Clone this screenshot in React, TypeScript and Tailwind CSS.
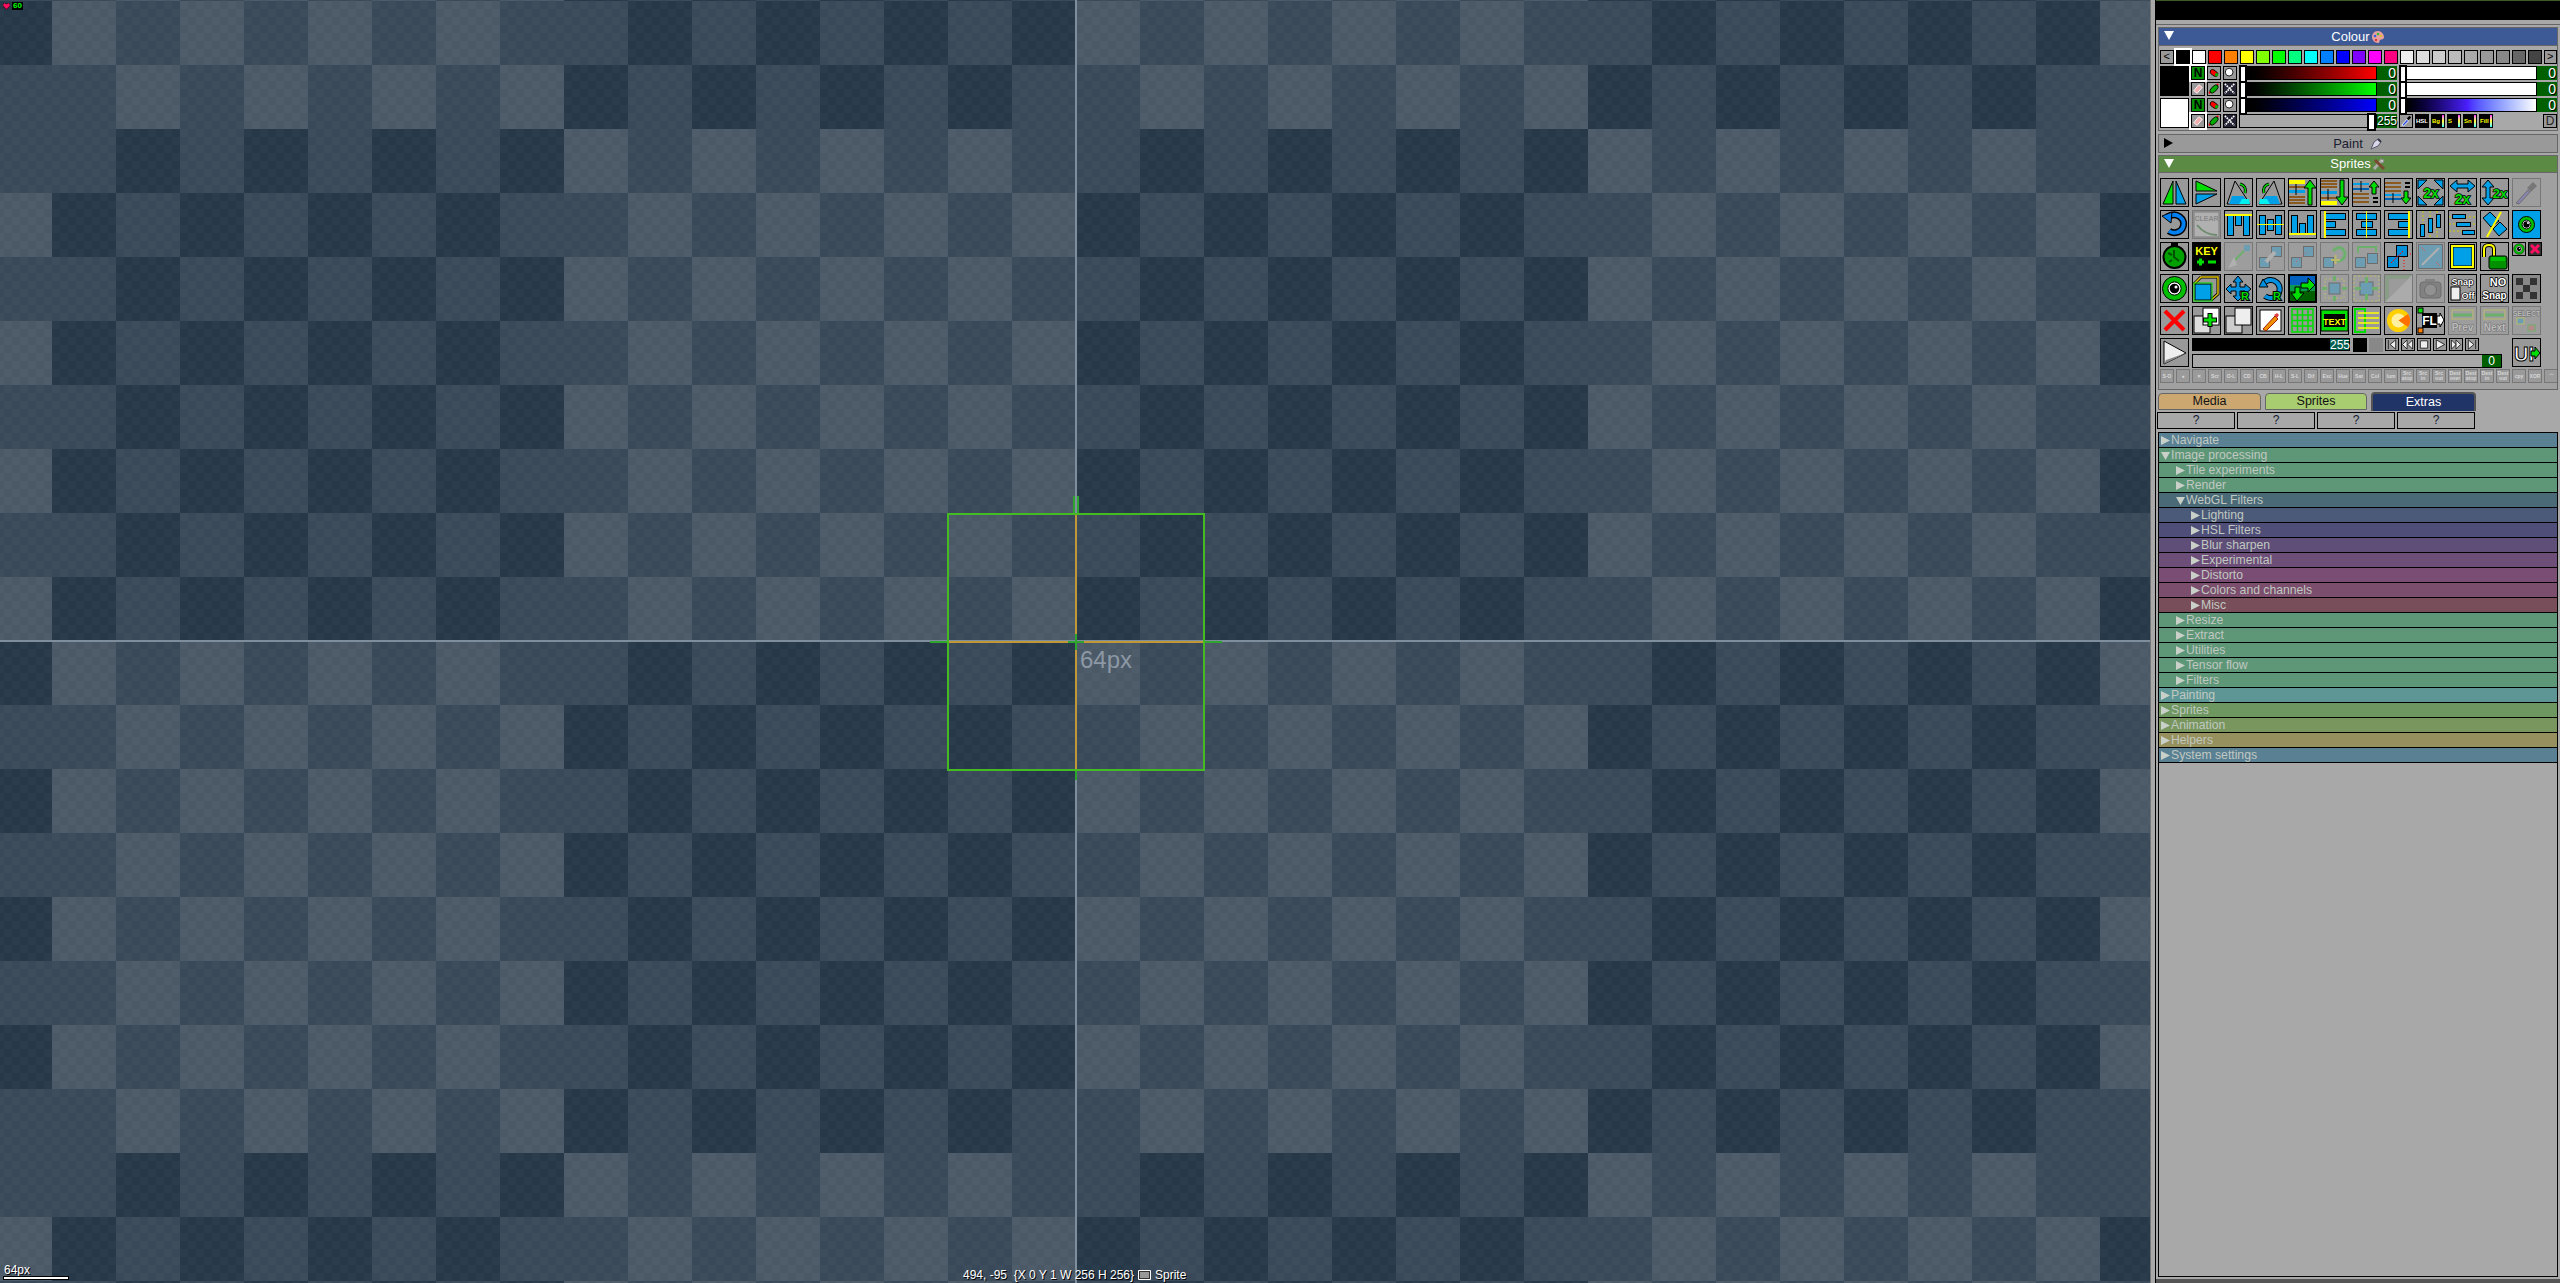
import React from 'react';

const swatches = [
  'bg-[#000000]', 'bg-[#ffffff]', 'bg-[#ff0000]', 'bg-[#ff8000]', 'bg-[#ffff00]', 'bg-[#80ff00]', 'bg-[#00ff00]', 'bg-[#00ff80]',
  'bg-[#00ffff]', 'bg-[#0080ff]', 'bg-[#0000ff]', 'bg-[#8000ff]', 'bg-[#ff00ff]', 'bg-[#ff0080]', 'bg-[#eeeeee]', 'bg-[#dddddd]',
  'bg-[#cccccc]', 'bg-[#bbbbbb]', 'bg-[#aaaaaa]', 'bg-[#999999]', 'bg-[#888888]', 'bg-[#666666]', 'bg-[#444444]',
];

const tree: { label: string; depth: number; open?: boolean; color: string }[] = [
  { label: 'Navigate', depth: 0, color: 'bg-[#5a8094]' },
  { label: 'Image processing', depth: 0, open: true, color: 'bg-[#5e9678]' },
  { label: 'Tile experiments', depth: 1, color: 'bg-[#5e9678]' },
  { label: 'Render', depth: 1, color: 'bg-[#5e9678]' },
  { label: 'WebGL Filters', depth: 1, open: true, color: 'bg-[#4a6a78]' },
  { label: 'Lighting', depth: 2, color: 'bg-[#4a5a78]' },
  { label: 'HSL Filters', depth: 2, color: 'bg-[#4e4e78]' },
  { label: 'Blur sharpen', depth: 2, color: 'bg-[#5e4e78]' },
  { label: 'Experimental', depth: 2, color: 'bg-[#6c4e78]' },
  { label: 'Distorto', depth: 2, color: 'bg-[#7a4e74]' },
  { label: 'Colors and channels', depth: 2, color: 'bg-[#7a4e6c]' },
  { label: 'Misc', depth: 2, color: 'bg-[#784e5a]' },
  { label: 'Resize', depth: 1, color: 'bg-[#5e9678]' },
  { label: 'Extract', depth: 1, color: 'bg-[#5e9678]' },
  { label: 'Utilities', depth: 1, color: 'bg-[#5e9678]' },
  { label: 'Tensor flow', depth: 1, color: 'bg-[#5e9678]' },
  { label: 'Filters', depth: 1, color: 'bg-[#5e9678]' },
  { label: 'Painting', depth: 0, color: 'bg-[#5e9696]' },
  { label: 'Sprites', depth: 0, color: 'bg-[#6e9660]' },
  { label: 'Animation', depth: 0, color: 'bg-[#78965e]' },
  { label: 'Helpers', depth: 0, color: 'bg-[#96905e]' },
  { label: 'System settings', depth: 0, color: 'bg-[#5a8094]' },
];

const depthPad = ['pl-[2px]', 'pl-[17px]', 'pl-[32px]'];

const G = '#00dd00';
const B = '#00a0e8';
const Y = '#ffff00';
const BR = '#8a5a20';

const Ico = ({ children, size = 27 }: { children: React.ReactNode; size?: number }) => (
  <svg viewBox="0 0 27 27" width={size} height={size} className="block" fontFamily="Liberation Sans, sans-serif" fontWeight="bold">
    {children}
  </svg>
);

// outlined label used inside the pixel icons
const T = ({ x, y, s, fill = Y, children, a = 'middle', w = 1.5 }: { x: number; y: number; s: number; fill?: string; children: string; a?: 'middle' | 'start'; w?: number }) => (
  <text x={x} y={y} fontSize={s} fill={fill} textAnchor={a} stroke="#000" strokeWidth={w} paintOrder="stroke">{children}</text>
);

const Bars = ({ rows, x = 1, w = 15 }: { rows: [number, string][]; x?: number; w?: number }) => (
  <g shapeRendering="crispEdges">
    {rows.map(([y, c], i) => <rect key={i} x={x} y={y} width={w} height={2} fill={c} />)}
  </g>
);

const Block = ({ x, y, w, h, fill = B }: { x: number; y: number; w: number; h: number; fill?: string }) => (
  <rect x={x + 0.5} y={y + 0.5} width={w} height={h} fill={fill} stroke="#000" shapeRendering="crispEdges" />
);

const Line = ({ x1, y1, x2, y2, c = Y, w = 1, dash }: { x1: number; y1: number; x2: number; y2: number; c?: string; w?: number; dash?: string }) => (
  <line x1={x1} y1={y1} x2={x2} y2={y2} stroke={c} strokeWidth={w} strokeDasharray={dash} />
);

const Arrows4 = ({ fill = B }: { fill?: string }) => (
  <polygon points="13,1 18,7 15,7 15,12 20,12 20,9 26,14 20,19 20,16 15,16 15,21 18,21 13,26 8,21 11,21 11,16 6,16 6,19 1,14 6,9 6,12 11,12 11,7 8,7" fill={fill} stroke="#000" />
);

const Eye = ({ r = 10 }: { r?: number }) => (
  <g>
    <circle cx="13.5" cy="13.5" r={r} fill="#00c000" stroke="#000" />
    <circle cx="13.5" cy="13.5" r={r * 0.55} fill="#fff" stroke="#000" />
    <circle cx="13.5" cy="13.5" r={r * 0.4} fill="#000" />
    <circle cx="15" cy="12" r={r * 0.13} fill="#fff" />
  </g>
);

const Cross = () => (
  <g stroke="#ff0000" strokeWidth="4">
    <line x1="4" y1="4" x2="23" y2="23" />
    <line x1="23" y1="4" x2="4" y2="23" />
  </g>
);

const grid: { icon: React.ReactNode; off?: boolean }[][] = [
  [
    { icon: <Ico><polygon points="12,2 12,25 2,25" fill={G} stroke="#000" /><polygon points="15,2 15,25 25,25" fill={B} stroke="#000" /></Ico> },
    { icon: <Ico><polygon points="3,2 24,12 3,12" fill={G} stroke="#000" /><polygon points="3,15 24,15 3,25" fill={B} stroke="#000" /></Ico> },
    { icon: <Ico><polygon points="10,2 25,25 2,25" fill="#999" stroke="#000" /><polygon points="7,17 18,17 25,25 4,25" fill={B} /><polygon points="17,20 24,20 25,25 14,25" fill="#00f0f0" /><path d="M15 5 Q22 7 20 14" fill="none" stroke="#000" strokeWidth="3" /><path d="M15 5 Q22 7 20 14" fill="none" stroke={G} strokeWidth="1.5" /></Ico> },
    { icon: <Ico><polygon points="17,2 2,25 25,25" fill="#999" stroke="#000" /><polygon points="20,17 9,17 2,25 23,25" fill={B} /><polygon points="10,20 3,20 2,25 13,25" fill="#00f0f0" /><path d="M12 5 Q5 7 7 14" fill="none" stroke="#000" strokeWidth="3" /><path d="M12 5 Q5 7 7 14" fill="none" stroke={G} strokeWidth="1.5" /></Ico> },
    { icon: <Ico><rect x="0" y="1" width="16" height="4" fill={Y} /><Bars w={16} x={0} rows={[[7, BR], [17, BR], [20, BR], [23, BR]]} /><rect x="0" y="11" width="16" height="3" fill={B} /><Line x1={7} y1={5} x2={7} y2={16} c="#000" /><polygon points="21,1 27,9 23,9 23,26 19,26 19,9 15,9" fill={G} stroke="#000" /></Ico> },
    { icon: <Ico><rect x="0" y="22" width="16" height="4" fill={Y} /><Bars w={16} x={0} rows={[[1, BR], [4, BR], [7, BR], [18, BR]]} /><rect x="0" y="12" width="16" height="3" fill={B} /><Line x1={7} y1={10} x2={7} y2={21} c="#000" /><polygon points="21,26 27,18 23,18 23,1 19,1 19,18 15,18" fill={G} stroke="#000" /></Ico> },
    { icon: <Ico><Bars w={16} x={0} rows={[[4, B], [9, '#0060b0'], [14, BR], [18, BR], [22, BR]]} /><Line x1={8} y1={2} x2={8} y2={13} c="#000" /><polygon points="21,2 26,8 23,8 23,15 19,15 19,8 16,8" fill={G} stroke="#000" /><Bars x={20} w={5} rows={[[18, '#000'], [22, '#000']]} /></Ico> },
    { icon: <Ico><Bars w={16} x={0} rows={[[3, BR], [7, BR], [11, BR], [15, B], [19, '#0060b0']]} /><Line x1={8} y1={14} x2={8} y2={24} c="#000" /><polygon points="21,25 26,19 23,19 23,12 19,12 19,19 16,19" fill={G} stroke="#000" /><Bars x={20} w={5} rows={[[3, '#000'], [7, '#000']]} /></Ico> },
    { icon: <Ico><path d="M1 1h9L1 10zM26 1h-9l9 9zM1 26h9l-9-9zM26 26h-9l9-9z" fill={B} stroke="#000" /><T x={14} y={19} s={14} fill={G}>2x</T></Ico> },
    { icon: <Ico><polygon points="1,7 8,1 8,5 19,5 19,1 26,7 19,13 19,9 8,9 8,13" fill={B} stroke="#000" /><T x={13.5} y={25} s={14} fill={G}>2x</T></Ico> },
    { icon: <Ico><polygon points="7,1 13,8 9,8 9,19 13,19 7,26 1,19 5,19 5,8 1,8" fill={B} stroke="#000" /><T x={19} y={19} s={13} fill={G}>2x</T></Ico> },
    { off: true, icon: <Ico><path d="M3 24 L15 11 L17 13 L6 25z" fill="#5a50e0" stroke="#000" /><path d="M14 9 L20 3 L24 7 L18 13z" fill="#222" /></Ico> },
  ],
  [
    { icon: <Ico><path d="M6 6 C16 0 25 8 22 16 C20 22 12 23 8 20" fill="none" stroke="#000" strokeWidth="7" /><path d="M6 6 C16 0 25 8 22 16 C20 22 12 23 8 20" fill="none" stroke="#0080f0" strokeWidth="4" /><polygon points="1,5 11,1 10,12" fill="#0080f0" stroke="#000" /></Ico> },
    { off: true, icon: <Ico><rect x="1" y="1" width="25" height="25" fill="#ddd" stroke="#333" /><T x={13.5} y={10} s={7} fill="#555" w={0}>CLEAR</T><path d="M4 14 Q12 24 24 24" fill="none" stroke="#060" strokeWidth="2" /></Ico> },
    { icon: <Ico><Block x={2} y={4} w={6} h={20} /><Block x={10} y={4} w={6} h={10} /><Block x={18} y={4} w={6} h={20} /><rect x="0" y="3" width="27" height="2" fill={Y} /></Ico> },
    { icon: <Ico><Block x={2} y={4} w={6} h={19} /><Block x={10} y={8} w={6} h={11} /><Block x={18} y={4} w={6} h={19} /><rect x="0" y="13" width="27" height="1" fill={Y} /></Ico> },
    { icon: <Ico><Block x={2} y={4} w={6} h={18} /><Block x={10} y={12} w={6} h={10} /><Block x={18} y={4} w={6} h={18} /><rect x="0" y="22" width="27" height="2" fill={Y} /></Ico> },
    { icon: <Ico><Block x={4} y={2} w={20} h={6} /><Block x={4} y={10} w={10} h={6} /><Block x={4} y={18} w={20} h={6} /><rect x="3" y="0" width="2" height="27" fill={Y} /></Ico> },
    { icon: <Ico><Block x={3} y={2} w={20} h={6} /><Block x={8} y={10} w={11} h={6} /><Block x={3} y={18} w={20} h={6} /><rect x="13" y="0" width="1" height="27" fill={Y} /></Ico> },
    { icon: <Ico><Block x={3} y={2} w={20} h={6} /><Block x={13} y={10} w={10} h={6} /><Block x={3} y={18} w={20} h={6} /><rect x="23" y="0" width="2" height="27" fill={Y} /></Ico> },
    { icon: <Ico><Line x1={6} y1={0} x2={6} y2={27} dash="2 2" c="#cc0" /><Line x1={13} y1={0} x2={13} y2={27} dash="2 2" c="#cc0" /><Line x1={20} y1={0} x2={20} y2={27} dash="2 2" c="#cc0" /><Block x={3} y={13} w={4} h={12} /><Block x={11} y={7} w={4} h={14} /><Block x={19} y={3} w={4} h={13} /></Ico> },
    { icon: <Ico><Line x1={0} y1={6} x2={27} y2={6} dash="2 2" c="#cc0" /><Line x1={0} y1={13} x2={27} y2={13} dash="2 2" c="#cc0" /><Line x1={0} y1={20} x2={27} y2={20} dash="2 2" c="#cc0" /><Block x={3} y={3} w={13} h={4} /><Block x={7} y={11} w={14} h={4} /><Block x={13} y={19} w={12} h={4} /></Ico> },
    { icon: <Ico><polygon points="2,7 9,1 18,10 10,16" fill={B} stroke="#000" /><polygon points="12,18 19,11 26,18 18,25" fill={B} stroke="#000" /><Line x1={20} y1={1} x2={6} y2={26} w={2} /></Ico> },
    { icon: <Ico><rect x="0" y="0" width="27" height="27" fill={B} /><Eye r={8} /></Ico> },
  ],
  [
    { icon: <Ico><circle cx="13.5" cy="14" r="11" fill="#00a000" stroke="#000" strokeWidth="2" /><path d="M13 7v7l5 4M7 10l4 2M8 19l3-2" stroke="#005000" strokeWidth="2" fill="none" /><rect x="10" y="0" width="7" height="3" fill="#000" /></Ico> },
    { icon: <Ico><rect width="27" height="27" fill="#000" /><text x="13.5" y="12" fontSize="11" textAnchor="middle" fill={Y}>KEY</text><path d="M4 19h7M7.5 15.5v7M15 19h8" stroke={G} strokeWidth="3" /></Ico> },
    { off: true, icon: <Ico><rect x="19" y="2" width="6" height="6" fill={B} /><path d="M6 21 L19 8" stroke={G} strokeWidth="2" /><polygon points="3,25 9,14 12,22" fill="#ddd" /></Ico> },
    { off: true, icon: <Ico><Block x={2} y={14} w={10} h={10} /><Block x={14} y={3} w={10} h={10} /><path d="M9 19 L18 9" stroke="#ddd" strokeWidth="4" /></Ico> },
    { off: true, icon: <Ico><Block x={2} y={14} w={10} h={10} /><Block x={14} y={3} w={10} h={10} /><Line x1={7} y1={19} x2={19} y2={8} c="#f00" dash="2 2" /></Ico> },
    { off: true, icon: <Ico><Block x={2} y={14} w={10} h={10} /><path d="M12 8 Q20 0 24 10 Q24 18 16 18" fill="none" stroke={G} strokeWidth="3" /><path d="M10 17h9M14.5 12v9" stroke={Y} strokeWidth="2" /></Ico> },
    { off: true, icon: <Ico><Block x={2} y={14} w={10} h={10} /><Block x={14} y={10} w={10} h={10} /><path d="M5 10V4h18v5" fill="none" stroke={G} strokeWidth="2" /></Ico> },
    { icon: <Ico><Line x1={19} y1={11} x2={27} y2={11} c="#f00" dash="1 2" /><Line x1={19} y1={11} x2={19} y2={27} c="#f00" dash="1 2" /><Block x={2} y={13} w={11} h={11} fill="#0090d8" /><Block x={11} y={2} w={11} h={11} fill="#0090d8" /><Line x1={6} y1={20} x2={18} y2={8} c="#f00" dash="2 1" /></Ico> },
    { off: true, icon: <Ico><Block x={1} y={1} w={24} h={24} /><path d="M5 22L22 5" stroke="#ddd" strokeWidth="2" /><path d="M4 4l4 4M23 23l-4-4" stroke="#f00" strokeWidth="1" /></Ico> },
    { icon: <Ico><rect x="4" y="4" width="19" height="19" fill={B} stroke="#000" /><rect x="3" y="3" width="21" height="21" fill="none" stroke={Y} strokeWidth="2" /><rect x="1.5" y="1.5" width="24" height="24" fill="none" stroke="#000" /></Ico> },
    { icon: <Ico><path d="M3 14V6Q3 2 8 2Q13 2 13 6V14" fill="none" stroke="#000" strokeWidth="4" /><path d="M3 14V6Q3 2 8 2Q13 2 13 6V14" fill="none" stroke={Y} strokeWidth="2" /><rect x="8" y="13" width="18" height="13" rx="2" fill="#009000" stroke="#000" /><rect x="10" y="14" width="14" height="4" fill="#00c000" /></Ico> },
  ],
  [
    { icon: <Ico><Eye r={12} /></Ico> },
    { icon: <Ico><path d="M8 2H25V19L18 25M8 2L1 9" fill="none" stroke="#000" strokeWidth="3" /><path d="M8 2H25V19L18 25M8 2L1 9" fill="none" stroke="#e0c000" strokeWidth="1.5" /><rect x="2" y="9" width="16" height="16" fill={B} stroke="#000" /><rect x="1" y="8" width="18" height="18" fill="none" stroke={G} /></Ico> },
    { icon: <Ico><Arrows4 fill="#0090e0" /><T x={20} y={25} s={11} fill={G} w={2}>R</T></Ico> },
    { icon: <Ico><path d="M7 8 A9 9 0 1 1 8 21" fill="none" stroke="#000" strokeWidth="6" /><path d="M7 8 A9 9 0 1 1 8 21" fill="none" stroke="#0090e0" strokeWidth="4" /><polygon points="2,12 11,12 6,4" fill="#0090e0" stroke="#000" /><T x={20} y={25} s={11} fill={G} w={2}>R</T></Ico> },
    { icon: <Ico><rect width="27" height="27" fill="#000" /><rect x="1" y="1" width="25" height="9" fill="#0060c0" /><rect x="1" y="10" width="25" height="6" fill="#0a9a50" /><rect x="1" y="16" width="25" height="10" fill="#006000" /><polygon points="12,8 19,8 19,3 26,10 19,17 19,13 12,13" fill={G} stroke="#000" /><polygon points="6,12 11,12 11,18 15,18 8,26 2,18 6,18" fill={G} stroke="#000" /></Ico> },
    { off: true, icon: <Ico><rect x="8" y="8" width="11" height="11" fill={B} stroke="#000" /><rect x="4" y="4" width="19" height="19" fill="none" stroke={Y} strokeDasharray="2 2" /><path d="M13.5 1v5M13.5 26v-5M1 13.5h5M26 13.5h-5" stroke={G} strokeWidth="3" /></Ico> },
    { off: true, icon: <Ico><rect x="7" y="7" width="13" height="13" fill={B} stroke="#000" /><rect x="1" y="1" width="25" height="25" fill="none" stroke={Y} strokeDasharray="2 2" /><path d="M13.5 2v6M13.5 25v-6M2 13.5h6M25 13.5h-6" stroke={G} strokeWidth="3" /></Ico> },
    { off: true, icon: <Ico><rect width="27" height="27" fill="#ccc" /><path d="M0 0h4v4h-4zM8 0h4v4h-4zM4 4h4v4h-4z" fill="#333" /><polygon points="0,0 27,0 0,27" fill="#5a9a5a" /><polygon points="4,4 23,4 4,23" fill="#999" /></Ico> },
    { off: true, icon: <Ico><rect x="3" y="7" width="21" height="16" rx="3" fill="#444" stroke="#000" /><circle cx="13.5" cy="15" r="6" fill="#777" stroke="#000" /><rect x="8" y="4" width="10" height="3" fill="#444" /></Ico> },
    { icon: <Ico><T x={13.5} y={10} s={9} fill="#fff" w={1.2}>Snap</T><rect x="2" y="12" width="9" height="13" fill="#eee" stroke="#000" /><T x={19} y={24} s={9} fill="#fff" w={1.2}>Off</T></Ico> },
    { icon: <Ico><T x={17} y={11} s={11} fill="#fff" w={1.5}>NO</T><T x={13.5} y={24} s={10} fill="#fff" w={1.5}>Snap</T></Ico> },
    { icon: <Ico><rect width="27" height="27" fill="#888" /><path d="M3 3h7v7H3zM17 3h7v7h-7zM10 10h7v7h-7zM3 17h7v7H3zM17 17h7v7h-7z" fill="#333" /></Ico> },
  ],
  [
    { icon: <Ico><Cross /></Ico> },
    { icon: <Ico><rect x="1" y="9" width="16" height="17" fill="#ddd" stroke="#000" /><rect x="10" y="1" width="16" height="17" fill="#fff" stroke="#000" /><path d="M17 6v14M10 13h14" stroke="#000" strokeWidth="5" /><path d="M17 7v12M11 13h12" stroke={G} strokeWidth="3" /></Ico> },
    { icon: <Ico><rect x="1" y="9" width="16" height="17" fill="#ccc" stroke="#000" /><rect x="10" y="1" width="16" height="17" fill="#eee" stroke="#000" /></Ico> },
    { icon: <Ico><rect x="3" y="3" width="21" height="21" fill="#fff" stroke="#000" /><path d="M6 22L18 9l3 3L9 24z" fill="#f09000" stroke="#a02000" /><path d="M17 8l3-2 2 2-2 3z" fill="#e04040" /></Ico> },
    { icon: <Ico><g stroke={G} strokeWidth="1.5" fill="none"><rect x="3" y="2" width="21" height="23" /><path d="M3 8h21M3 13.5h21M3 19h21M8.500 2v23M13.500 2v23M19 2v23" /></g></Ico> },
    { icon: <Ico><rect x="0" y="3" width="27" height="21" fill={G} stroke="#000" /><rect x="3" y="7" width="21" height="13" fill="#000" /><text x="13.5" y="18" fontSize="9" textAnchor="middle" fill={Y}>TEXT</text></Ico> },
    { icon: <Ico><rect x="2" y="2" width="10" height="23" fill="none" stroke={G} strokeWidth="2" /><path d="M5 6h21M5 11h21M5 16h21M5 21h21" stroke={Y} strokeWidth="1.500" /></Ico> },
    { icon: <Ico><circle cx="13.5" cy="13.5" r="11.5" fill="#ffd000" /><circle cx="13.5" cy="13.5" r="7" fill="#fff0a0" /><path d="M13.500 13.500L23 7A11.500 11.500 0 0 1 23 20z" fill="#ff7000" /></Ico> },
    { icon: <Ico><rect x="1" y="1" width="5" height="5" fill={G} stroke="#000" /><rect x="1" y="21" width="5" height="5" fill="#ff8000" stroke="#000" /><rect x="5" y="6" width="15" height="15" fill="#000" /><text x="12.500" y="18" fontSize="12" textAnchor="middle" fill="#fff">FL</text><polygon points="20,9 23,9 23,6 27,13 23,20 23,17 20,17" fill="#fff" stroke="#000" /></Ico> },
    { off: true, icon: <Ico><path d="M4 8h19" stroke={G} strokeWidth="3" /><rect x="3" y="3" width="21" height="9" fill="none" stroke={Y} /><T x={13.5} y={24} s={10} fill="#fff" w={1}>Prev</T></Ico> },
    { off: true, icon: <Ico><path d="M4 8h19" stroke={G} strokeWidth="3" /><rect x="3" y="3" width="21" height="9" fill="none" stroke={Y} /><T x={13.5} y={24} s={10} fill="#fff" w={1}>Next</T></Ico> },
    { off: true, icon: <Ico><T x={13.5} y={9} s={7} fill="#fff" w={1}>SELECT</T><rect x="4" y="11" width="7" height="6" fill={B} stroke={Y} /><rect x="15" y="18" width="7" height="6" fill="#f06060" stroke={G} /></Ico> },
  ],
];

const miniLabels = ['S-O', '●', '✕', 'Scr', 'O-L', 'CD', 'CB', 'H-L', 'S-L', 'Dif', 'Exc', 'Hue', 'Sat', 'Col', 'lum', 'Src atop', 'Src in', 'Src out', 'Dest over', 'Dest atop', 'Dest in', 'Dest out', 'cpy', 'XOR', '⌒'];

const Btn = ({ children, off }: { children: React.ReactNode; off?: boolean }) => (
  <div className={off ? 'w-[29px] h-[29px] border border-[#777] bg-[#9d9d9d] overflow-hidden' : 'w-[29px] h-[29px] border border-black bg-[#999] overflow-hidden'}>
    <div className={off ? 'opacity-30' : ''}>{children}</div>
  </div>
);

const Tiny = ({ children, selected }: { children?: React.ReactNode; selected?: boolean }) => (
  <div className={selected ? 'w-[14px] h-[14px] outline-2 outline-white border border-black bg-[#999] overflow-hidden relative z-10' : 'w-[14px] h-[14px] border border-black bg-[#999] overflow-hidden'}>
    {children}
  </div>
);

const Value = ({ children }: { children: string }) => (
  <div className={`w-[20px] h-full bg-[#006000] text-white ${children.length > 1 ? 'text-[12px]' : 'text-[14px]'} leading-[14px] text-right pr-[1px] [text-shadow:1px_1px_0_#000]`}>{children}</div>
);

const Slider = ({ fill, value, at = 'left' }: { fill: string; value: string; at?: 'left' | 'right' }) => (
  <div className="flex h-[14px] w-[158px]">
    <div className={`relative w-[138px] h-full border border-black ${fill}`}>
      <div className={at === 'left' ? 'absolute left-[-1px] top-[-2px] w-[8px] h-[18px] bg-white border-2 border-black' : 'absolute right-[0px] top-[-2px] w-[9px] h-[18px] bg-white border-2 border-black'} />
    </div>
    <Value>{value}</Value>
  </div>
);

const Tag = ({ children, color }: { children: string; color: string }) => (
  <div className="relative w-[14px] h-[14px] border border-black bg-black overflow-hidden">
    <span className={`absolute left-0 top-[-1px] text-[6px] leading-[14px] font-bold ${color}`}>{children}</span>
    <span className="absolute right-0 top-0 w-[2px] h-full bg-linear-to-b from-[#ff00ff] via-[#ffff00] to-[#00ffff]" />
  </div>
);

const Header = ({ title, open, tone, icon, h = 'h-[19px]' }: { title: string; open?: boolean; tone: string; icon: React.ReactNode; h?: string }) => (
  <div className={`relative flex items-center justify-center gap-[1px] ${h} ${tone} text-[13px] border border-[#666]`}>
    <svg viewBox="0 0 10 10" width="10" height="10" className="absolute left-[5px] top-[3px]">
      {open ? <polygon points="0,0 10,0 5,9" fill="#fff" /> : <polygon points="0,0 9,5 0,10" fill="#000" />}
    </svg>
    <span>{title}</span>
    {icon}
  </div>
);

const Canvas = () => (
  <main className="relative flex-1 h-full overflow-hidden bg-[#273849] [background-image:repeating-conic-gradient(#0000_0_25%,#ffffff05_0_50%),repeating-conic-gradient(#0000_0_25%,#ffffff16_0_50%),repeating-conic-gradient(#0000_0_25%,#ffffff16_0_50%)] [background-size:16px_16px,128px_128px,1024px_1024px] [background-position:12px_9px,52px_1px,564px_129px]">
    {/* fps meter */}
    <div className="absolute left-[3px] top-[2px] flex items-center gap-[2px]">
      <svg viewBox="0 0 8 8" width="7" height="7" className="block"><path d="M0 1h1V0h2v1h2V0h2v1h1v3H7v1H6v1H5v1H3V6H2V5H1V4H0z" fill="#ff1060" stroke="#000" strokeWidth=".5" /></svg>
      <span className="bg-black text-[#00ff00] text-[8px] leading-[8px] font-bold px-[1px]">60</span>
    </div>

    {/* axes */}
    <div className="absolute left-[1075px] top-0 w-[2px] h-full bg-[#7f8e9c]" />
    <div className="absolute left-0 top-[640px] w-full h-[2px] bg-[#7f8e9c]" />

    {/* selection guides */}
    <div className="absolute left-[1073px] top-[496px] w-[6px] h-[17px] border-x-2 border-[#2ea52e]" />
    <div className="absolute left-[947px] top-[641px] w-[258px] h-[2px] bg-[#c09838]" />
    <div className="absolute left-[1075px] top-[513px] w-[2px] h-[258px] bg-[#c09838]" />
    <div className="absolute left-[930px] top-[641px] w-[18px] h-[2px] bg-[#2ea52e]" />
    <div className="absolute left-[1204px] top-[641px] w-[18px] h-[2px] bg-[#2ea52e]" />
    <div className="absolute left-[1068px] top-[641px] w-[16px] h-[2px] bg-[#2ea52e]" />
    <div className="absolute left-[1075px] top-[634px] w-[2px] h-[16px] bg-[#2ea52e]" />
    <div className="absolute left-[1075px] top-[771px] w-[2px] h-[9px] bg-[#2ea52e]" />
    <div className="absolute left-[947px] top-[513px] w-[258px] h-[258px] border-2 border-[#44bb22]" />
    <span className="absolute left-[1080px] top-[646px] text-[24px] leading-[28px] text-[#8c98a4]">64px</span>

    {/* scale and status */}
    <span className="absolute left-[4px] top-[1263px] text-[12px] leading-[14px] text-white [text-shadow:1px_1px_0_#000]">64px</span>
    <div className="absolute left-[3px] top-[1276px] w-[66px] h-[4px] bg-white border border-black" />
    <div className="absolute left-[963px] top-[1268px] flex items-center text-[12px] leading-[14px] text-white [text-shadow:1px_1px_0_#000] whitespace-pre">
      <span>494, -95  {'{'}X 0 Y 1 W 256 H 256{'}'}</span>
      <svg viewBox="0 0 13 10" width="13" height="10" className="mx-[4px]"><path d="M.5.500h12v9H.5zM2 3h9M2 5h9M2 7h9" fill="#333" stroke="#fff" /></svg>
      <span>Sprite</span>
    </div>
  </main>
);

const ColourPanel = () => (
  <div className="flex flex-col gap-[2px] h-[85px] bg-[#a8a8a8] border-x border-b border-[#666] pl-[1px] pt-[4px]">
    <div className="flex gap-[2px] h-[14px]">
      <div className="w-[14px] h-[14px] border border-black bg-[#999] text-[11px] leading-[11px] text-center">&lt;</div>
      <div className="flex gap-[2px]">
        {swatches.map((c, i) => (
          <div key={i} className={i === 0 ? `w-[14px] h-[14px] border border-black outline-2 outline-white ${c}` : `w-[14px] h-[14px] border border-black ${c}`} />
        ))}
      </div>
      <div className="w-[14px] h-[14px] border border-black bg-[#999] text-[11px] leading-[11px] text-center">&gt;</div>
    </div>
    <div className="flex gap-[2px]">
      <div className="flex flex-col gap-[2px] w-[30px]">
        <div className="h-[30px] bg-black" />
        <div className="h-[30px] bg-white border border-black" />
      </div>
      <div className="grid grid-cols-[14px_14px_14px_158px_158px] gap-x-[2px] gap-y-[2px] auto-rows-[14px]">
        <Tiny selected><span className="block bg-[#009000] text-black text-[12px] leading-[12px] font-bold text-center">N</span></Tiny>
        <Tiny><svg viewBox="0 0 14 14"><ellipse cx="7" cy="7" rx="5" ry="3" fill="#f00" stroke="#000" transform="rotate(35 7 7)" /><circle cx="10" cy="9" r="2" fill="#0a0" /></svg></Tiny>
        <Tiny><svg viewBox="0 0 14 14"><circle cx="6" cy="6" r="4.500" fill="#fff" stroke="#000" /></svg></Tiny>
        <Slider fill="bg-linear-to-r from-black to-[#ff0000]" value="0" />
        <Slider fill="bg-white" value="0" />

        <Tiny><svg viewBox="0 0 14 14"><path d="M2 9L8 2l4 3-6 7z" fill="#f0b0b0" stroke="#fff" /></svg></Tiny>
        <Tiny><svg viewBox="0 0 14 14"><path d="M1 12L12 1" stroke="#f00" strokeWidth="2" /><ellipse cx="7" cy="7" rx="6" ry="3" fill="#0a0" stroke="#000" transform="rotate(-45 7 7)" /></svg></Tiny>
        <Tiny><svg viewBox="0 0 14 14"><rect width="14" height="14" fill="#223" /><path d="M1 1l11 11M12 1L1 12" stroke="#fff" strokeWidth="2" strokeDasharray="2 1" /></svg></Tiny>
        <Slider fill="bg-linear-to-r from-black to-[#00ff00]" value="0" />
        <Slider fill="bg-white" value="0" />

        <Tiny><span className="block bg-[#009000] text-black text-[12px] leading-[12px] font-bold text-center">N</span></Tiny>
        <Tiny><svg viewBox="0 0 14 14"><ellipse cx="7" cy="7" rx="5" ry="3" fill="#f00" stroke="#000" transform="rotate(35 7 7)" /><circle cx="10" cy="9" r="2" fill="#0a0" /></svg></Tiny>
        <Tiny><svg viewBox="0 0 14 14"><circle cx="6" cy="6" r="4.500" fill="#fff" stroke="#000" /></svg></Tiny>
        <Slider fill="bg-linear-to-r from-black to-[#0000ff]" value="0" />
        <Slider fill="bg-linear-to-r from-black via-[#4a20ff] to-white" value="0" />

        <Tiny selected><svg viewBox="0 0 14 14"><path d="M2 9L8 2l4 3-6 7z" fill="#f0b0b0" stroke="#fff" /></svg></Tiny>
        <Tiny><svg viewBox="0 0 14 14"><path d="M1 12L12 1" stroke="#f00" strokeWidth="2" /><ellipse cx="7" cy="7" rx="6" ry="3" fill="#0a0" stroke="#000" transform="rotate(-45 7 7)" /></svg></Tiny>
        <Tiny><svg viewBox="0 0 14 14"><rect width="14" height="14" fill="#223" /><path d="M1 1l11 11M12 1L1 12" stroke="#fff" strokeWidth="2" strokeDasharray="2 1" /></svg></Tiny>
        <Slider fill="bg-[#a8a8a8]" value="255" at="right" />
        <div className="flex gap-[2px] h-[14px]">
          <Tiny><svg viewBox="0 0 14 14"><path d="M2 12L8 5l2 2-6 6z" fill="#3050e0" stroke="#fff" /><path d="M8 4l3-3 2 2-3 3z" fill="#000" /></svg></Tiny>
          <div className="w-[14px] h-[14px] border border-black bg-black text-white text-[6px] leading-[12px] font-bold text-center">HSL</div>
          <Tag color="text-[#ffff00]">Bg</Tag>
          <Tag color="text-[#ffff00]">S</Tag>
          <Tag color="text-[#ffff00]">Sn</Tag>
          <Tag color="text-[#ffff00]">Fill</Tag>
          <div className="w-[14px]" />
          <div className="w-[14px]" />
          <div className="w-[14px]" />
          <div className="w-[14px] h-[14px] shrink-0 border border-black bg-[#999] text-[12px] leading-[12px] text-center text-[#222]">D</div>
        </div>
      </div>
    </div>
  </div>
);

const SpritesPanel = () => (
  <div className="flex flex-col h-[217px] bg-[#a0a0a0] border-x border-b border-[#666] pl-[1px] pt-[5px]">
    {grid.map((row, r) => (
      <div key={r} className="flex gap-[3px] h-[32px]">
        {row.map((b, c) => <Btn key={c} off={b.off}>{b.icon}</Btn>)}
        {r === 2 && (
          <div className="flex gap-[2px] h-[14px]">
            <div className="w-[14px] h-[14px] border border-black bg-[#999] overflow-hidden"><Ico size={12}><Eye r={12} /></Ico></div>
            <div className="w-[14px] h-[14px] border border-black bg-[#333] overflow-hidden"><svg viewBox="0 0 12 12"><path d="M2 2l8 8M10 2l-8 8" stroke="#ff1060" strokeWidth="3" /></svg></div>
          </div>
        )}
      </div>
    ))}
    {/* playback */}
    <div className="flex gap-[3px] h-[32px]">
      <Btn><Ico><polygon points="3,2 25,14 3,25" fill="#eee" stroke="#000" /><polygon points="5,21 25,14 3,25" fill="#888" /></Ico></Btn>
      <div className="flex flex-col gap-[2px] w-[310px]">
        <div className="flex items-start gap-[3px] h-[14px]">
          <div className="flex w-[158px] h-[13px] border border-black">
            <div className="flex-1 bg-black" />
            <div className="w-[19px] bg-[#006050] text-white text-[12px] leading-[12px] text-center">255</div>
          </div>
          <div className="w-[14px] h-[14px] bg-black" />
          <div className="w-[14px] h-[14px] -ml-[1px] bg-[#888]" />
          <div className="flex gap-[2px] -ml-[1px]">
            {['M2 1v10M10 1L4 6l6 5z', 'M5 1L0 6l5 5zM11 1L6 6l5 5z', 'M2 2h8v8H2z', 'M2 1l9 5-9 5z', 'M1 1l5 5-5 5zM6 1l5 5-5 5z', 'M2 1l6 5-6 5zM10 1v10'].map((d, i) => (
              <div key={i} className="w-[14px] h-[13px] border border-black bg-[#999]">
                <svg viewBox="0 0 12 12" width="12" height="11"><path d={d} fill="#eee" stroke="#000" strokeWidth=".8" /></svg>
              </div>
            ))}
          </div>
        </div>
        <div className="flex w-[310px] h-[14px] border border-black bg-[#a8a8a8]">
          <div className="flex-1" />
          <div className="w-[19px] bg-[#006000] text-white text-[12px] leading-[12px] text-center">0</div>
        </div>
      </div>
      <div className="ml-[7px]">
        <Btn><Ico><text x="1" y="22" fontSize="20" fontWeight="bold" fill="#fff" stroke="#000" strokeWidth="1">UI</text><polygon points="18,12 22,12 22,8 27,14 22,20 22,17 18,17" fill={G} stroke="#000" /></Ico></Btn>
      </div>
    </div>
    {/* blend modes */}
    <div className="flex gap-[2px] h-[14px] overflow-hidden -mt-[1px]">
      {miniLabels.map((m, i) => (
        <div key={i} className="w-[14px] h-[14px] shrink-0 border border-[#777] bg-[#9a9a9a] text-[#d8d8d8] text-[5px] leading-[5px] text-center flex items-center justify-center font-bold">{m}</div>
      ))}
    </div>
  </div>
);

export default function App() {
  return (
    <div className="flex w-full h-[1283px] overflow-hidden font-['Liberation_Sans',sans-serif]">
      <Canvas />
      <aside className="w-[410px] shrink-0 h-full bg-[#a8a8a8] border-l border-[#777] pl-[4px]">
        <div className="flex flex-col h-full border-l border-black">
          <div className="h-[20px] bg-black border-t border-[#3a5a2a]" />
          <div className="h-[4px]" />
          <div className="h-[1px] bg-[#666]" />
          <div className="flex flex-col flex-1 px-[2px] pt-[2px]">
            <Header title="Colour" open tone="bg-[#3d5a96] text-white" icon={
              <svg viewBox="0 0 14 14" width="14" height="14"><path d="M7 1C3 1 1 4 1 7s3 6 6 6c2 0 1-2 2-3s4 0 4-3-3-6-6-6z" fill="#e8a0a0" /><circle cx="4" cy="6" r="1.300" fill="#3060e0" /><circle cx="7" cy="4" r="1.300" fill="#30c030" /><circle cx="10" cy="6" r="1.300" fill="#e0c030" /><circle cx="5" cy="10" r="1.300" fill="#d04040" /></svg>
            } />
            <ColourPanel />
            <div className="mt-[3px]">
              <Header title="Paint" tone="bg-[#999] text-[#1a2030]" icon={
                <svg viewBox="0 0 14 14" width="14" height="14" className="ml-[5px]"><path d="M2 12L5 5l4-3 3 3-3 4z" fill="#d8d8e8" stroke="#556" /><path d="M9 2l3 3" stroke="#334" strokeWidth="2" /></svg>
              } />
            </div>
            <div className="mt-[2px]">
              <Header title="Sprites" open h="h-[18px]" tone="bg-[#5a8a44] text-white" icon={
                <svg viewBox="0 0 14 14" width="14" height="14"><path d="M2 12L10 3" stroke="#aaa" strokeWidth="3" /><path d="M3 3l9 9" stroke="#7a4a30" strokeWidth="3" /><path d="M8 2l4 1-1 3" fill="#ccc" stroke="#888" /></svg>
              } />
            </div>
            <SpritesPanel />

            {/* tabs */}
            <div className="flex gap-[4px] mt-[3px] h-[17px]">
              <div className="w-[103px] rounded-t-[4px] border border-[#666] bg-[#cca870] text-[#111] text-[12.500px] leading-[15px] text-center">Media</div>
              <div className="w-[102px] rounded-t-[4px] border border-[#666] bg-[#a8cc70] text-[#111] text-[12.500px] leading-[15px] text-center">Sprites</div>
              <div className="w-[105px] -mt-[1px] h-[19px] rounded-t-[4px] border-2 border-b-0 border-[#555] bg-[#203468] text-white text-[12.500px] leading-[16px] text-center">Extras</div>
            </div>
            <div className="flex gap-[2px] -ml-[1px] mt-[2px] h-[17px]">
              {[0, 1, 2, 3].map(i => (
                <div key={i} className="w-[78px] border border-black text-[#111a30] text-[12px] leading-[15px] text-center">?</div>
              ))}
            </div>

            {/* tree */}
            <div className="flex-1 mt-[3px] mb-[2px] border border-black">
              {tree.map(t => (
                <div key={t.label} className={`flex items-center h-[15px] border-b border-black ${t.color} ${depthPad[t.depth]} text-[#c0c8c0] text-[12.200px] leading-[14px]`}>
                  <svg viewBox="0 0 9 9" width="9" height="9" className="mr-[1px]">
                    {t.open ? <polygon points="0,1 9,1 4.500,9" fill="#c8d0c8" /> : <polygon points="0,0 9,4.500 0,9" fill="#c8d0c8" />}
                  </svg>
                  <span>{t.label}</span>
                </div>
              ))}
            </div>
          </div>
          <div className="h-[4px] bg-[#555]" />
        </div>
      </aside>
    </div>
  );
}
